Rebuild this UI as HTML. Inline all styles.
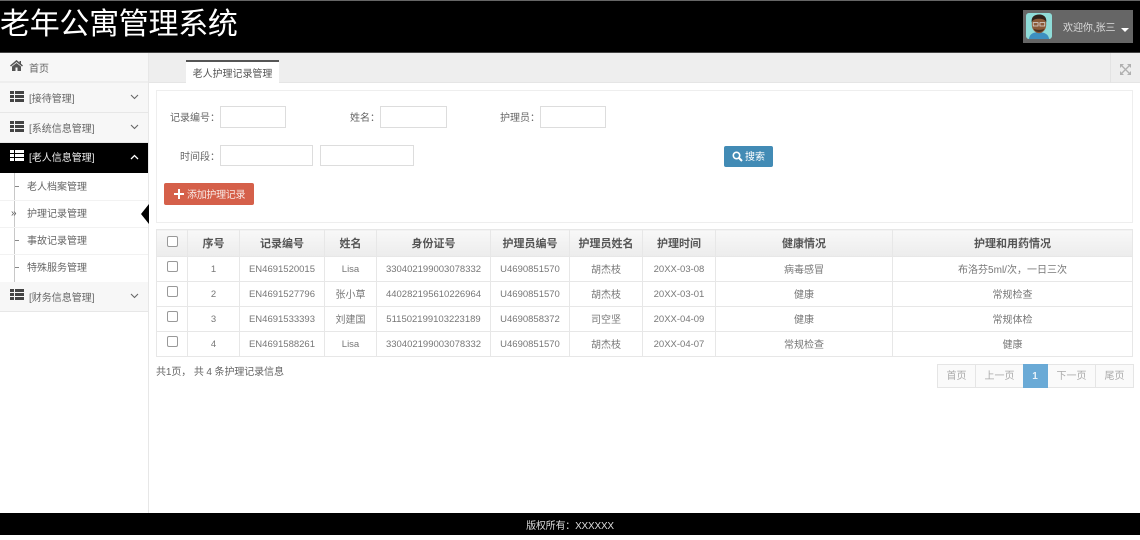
<!DOCTYPE html>
<html lang="zh">
<head>
<meta charset="utf-8">
<title>老年公寓管理系统</title>
<style>
html,body{margin:0;padding:0;width:1140px;height:535px;overflow:hidden;background:#fff;font-family:"Liberation Sans","Noto Sans CJK SC",sans-serif;color:#666;font-size:10px}
.a{position:absolute;box-sizing:border-box;white-space:nowrap}
.nav{left:0;width:148px;background:#f7f7f7;border-bottom:1px solid #e7e7e7;color:#666}
.nt{position:absolute;left:29px;top:0;font-size:10px}
.sub{left:27px;font-size:10px;color:#666;line-height:14px}
.ln{height:1px;left:0;width:148px;background:#f2f2f2}
.lab{font-size:10px;color:#666;line-height:14px;text-align:right}
.inp{background:#fff;border:1px solid #ddd;height:22px}
table{position:absolute;left:156px;top:229px;width:976px;border-collapse:collapse;table-layout:fixed;font-size:10px;color:#777}
th,td{border:1px solid #e7e7e7;text-align:center;padding:0;overflow:hidden;white-space:nowrap}
th{height:26px;background:linear-gradient(#f8f8f8,#ececec);color:#555;font-size:11px;font-weight:bold}
td{height:22px;padding-bottom:2px}
td.n{font-size:9.500px;height:24px;padding-bottom:0}
.cb{display:inline-block;width:9px;height:9px;border:1px solid #999;border-radius:2px;background:#fff;vertical-align:middle;margin-top:-3px}
.pg{top:364px;height:24px;background:#fafafa;border:1px solid #e5e5e5;border-left:0;color:#aaa;font-size:10px;line-height:24px;text-align:center}
</style>
</head>
<body>
<div class="a" style="left:0;top:0;width:1140px;height:53px;background:#000;border-top:1px solid #666;border-bottom:1px solid #444"></div>
<div class="a" style="left:0;top:6px;font-size:30px;line-height:38px;color:#fff;letter-spacing:-.3px">老年公寓管理系统</div>
<div class="a" style="left:1023px;top:10px;width:110px;height:33px;background:#666"></div>
<svg class="a" style="left:1026px;top:13px" width="26" height="26" viewBox="0 0 27 27">
<rect width="27" height="27" rx="3" fill="#8fdcd8"/>
<path d="M3 27c1-6 5-7 10-7s10 1 11 7z" fill="#3d8fc0"/>
<ellipse cx="13.500" cy="12" rx="7.500" ry="9" fill="#8a5a38"/>
<path d="M6 10C5 3 10 1.500 14 1.500S22 4 21 10c-1-3-3-4-7.500-4S7 7 6 10z" fill="#2e2018"/>
<path d="M8 16c1 5 10 5 11 0-1 2-10 2-11 0z" fill="#4a2e1c"/>
<rect x="7.500" y="10" width="5" height="3.500" fill="none" stroke="#ddd" stroke-width=".8"/>
<rect x="14.500" y="10" width="5" height="3.500" fill="none" stroke="#ddd" stroke-width=".8"/>
</svg>
<div class="a" style="left:1063px;top:22px;font-size:10px;line-height:14px;color:#ddd;letter-spacing:-.05px">欢迎你,张三</div>
<div class="a" style="left:1121px;top:28px;width:0;height:0;border-left:4.500px solid transparent;border-right:4.500px solid transparent;border-top:4.500px solid #fff"></div>

<div class="a" style="left:148px;top:53px;width:1px;height:460px;background:#e7e7e7"></div>

<div class="a nav" style="top:53px;height:30px;border-bottom:2px solid #eee"><svg class="a" style="left:10px;top:7px" width="13" height="11" viewBox="0 0 13 11"><path d="M6.500 0L0 5.500l1 1 5.500-4.500L12 6.500l1-1-2-1.700V1H9.500v1.500z M2 6.500V11h3.500V7.500h2V11H11V6.500L6.500 3z" fill="#555"/></svg><span class="nt" style="top:7px">首页</span></div>
<div class="a nav" style="top:83px;height:30px"></div>
<div class="a nav" style="top:113px;height:30px"></div>
<div class="a" style="left:0;top:143px;width:148px;height:30px;background:#000"></div>
<div class="a nav" style="top:282px;height:30px"></div>

<svg class="a" style="left:10px;top:91px" width="14" height="11"><path d="M0 0h4v3H0zM5 0h9v3H5zM0 4h4v3H0zM5 4h9v3H5zM0 8h4v3H0zM5 8h9v3H5z" fill="#444"/></svg>
<svg class="a" style="left:10px;top:121px" width="14" height="11"><path d="M0 0h4v3H0zM5 0h9v3H5zM0 4h4v3H0zM5 4h9v3H5zM0 8h4v3H0zM5 8h9v3H5z" fill="#444"/></svg>
<svg class="a" style="left:10px;top:150px" width="14" height="11"><path d="M0 0h4v3H0zM5 0h9v3H5zM0 4h4v3H0zM5 4h9v3H5zM0 8h4v3H0zM5 8h9v3H5z" fill="#fff"/></svg>
<svg class="a" style="left:10px;top:289px" width="14" height="11"><path d="M0 0h4v3H0zM5 0h9v3H5zM0 4h4v3H0zM5 4h9v3H5zM0 8h4v3H0zM5 8h9v3H5z" fill="#444"/></svg>

<div class="a" style="left:29px;top:93px;line-height:14px">[接待管理]</div>
<div class="a" style="left:29px;top:123px;line-height:14px">[系统信息管理]</div>
<div class="a" style="left:29px;top:152px;line-height:14px;color:#eee">[老人信息管理]</div>
<div class="a" style="left:29px;top:292px;line-height:14px">[财务信息管理]</div>

<svg class="a" style="left:130px;top:94px" width="9" height="6"><path d="M1 1l3.500 3.500L8 1" fill="none" stroke="#666" stroke-width="1.100"/></svg>
<svg class="a" style="left:130px;top:124px" width="9" height="6"><path d="M1 1l3.500 3.500L8 1" fill="none" stroke="#666" stroke-width="1.100"/></svg>
<svg class="a" style="left:130px;top:154px" width="9" height="6"><path d="M1 5l3.500-3.500L8 5" fill="none" stroke="#fff" stroke-width="1.300"/></svg>
<svg class="a" style="left:130px;top:293px" width="9" height="6"><path d="M1 1l3.500 3.500L8 1" fill="none" stroke="#666" stroke-width="1.100"/></svg>

<div class="a" style="left:14px;top:173px;width:1px;height:109px;background:#c8c8c8"></div>
<div class="a" style="left:15px;top:186px;width:4px;height:1px;background:#888"></div>
<div class="a" style="left:15px;top:240px;width:4px;height:1px;background:#888"></div>
<div class="a" style="left:15px;top:267px;width:4px;height:1px;background:#888"></div>
<div class="a" style="left:11px;top:207px;font-size:10px;line-height:14px;color:#555">»</div>
<div class="a ln" style="top:200px"></div><div class="a ln" style="top:227px"></div><div class="a ln" style="top:254px"></div>
<div class="a sub" style="top:181px">老人档案管理</div>
<div class="a sub" style="top:208px">护理记录管理</div>
<div class="a sub" style="top:235px">事故记录管理</div>
<div class="a sub" style="top:262px">特殊服务管理</div>
<div class="a" style="left:141px;top:204px;width:0;height:0;border-top:10px solid transparent;border-bottom:10px solid transparent;border-right:8px solid #000"></div>

<div class="a" style="left:149px;top:53px;width:991px;height:30px;background:#eee;border-bottom:1px solid #e5e5e5"></div>
<div class="a" style="left:186px;top:60px;width:93px;height:23px;background:#fff;border-top:2px solid #555;font-size:10px;line-height:25px;text-align:center;color:#555;letter-spacing:-.03px">老人护理记录管理</div>
<div class="a" style="left:1110px;top:53px;width:1px;height:30px;background:#e3e3e3"></div>
<svg class="a" style="left:1120px;top:64px" width="11" height="11" viewBox="0 0 11 11"><path d="M0 0h4L0 4zM11 0v4L7 0zM0 11V7l4 4zM11 11H7l4-4z" fill="#b0b0b0"/><path d="M2 2l7 7M9 2l-7 7" stroke="#b0b0b0" stroke-width="1.300"/></svg>

<div class="a" style="left:156px;top:90px;width:977px;height:133px;border:1px solid #eee;background:#fff"></div>
<div class="a lab" style="left:164px;top:112px;width:56px">记录编号：</div>
<div class="a inp" style="left:220px;top:106px;width:66px"></div>
<div class="a lab" style="left:324px;top:112px;width:56px">姓名：</div>
<div class="a inp" style="left:380px;top:106px;width:67px"></div>
<div class="a lab" style="left:484px;top:112px;width:56px">护理员：</div>
<div class="a inp" style="left:540px;top:106px;width:66px"></div>
<div class="a lab" style="left:164px;top:151px;width:56px">时间段：</div>
<div class="a inp" style="left:220px;top:145px;width:93px;height:21px"></div>
<div class="a inp" style="left:320px;top:145px;width:94px;height:21px"></div>
<div class="a" style="left:724px;top:146px;width:49px;height:21px;background:#428bb5;border-radius:2px;color:#fff;font-size:10px;line-height:24px;padding-left:21px">搜索</div>
<svg class="a" style="left:732px;top:151px" width="11" height="11" viewBox="0 0 11 11"><circle cx="4.500" cy="4.500" r="3.200" fill="none" stroke="#fff" stroke-width="1.600"/><path d="M7 7l3 3" stroke="#fff" stroke-width="2"/></svg>
<div class="a" style="left:164px;top:183px;width:90px;height:22px;background:#d5604a;border-radius:2px;color:#f8e8e4;font-size:10px;letter-spacing:-.3px;line-height:26px;padding-left:23px">添加护理记录</div>
<svg class="a" style="left:174px;top:189px" width="10" height="10"><path d="M4 0h2v4h4v2H6v4H4V6H0V4h4z" fill="#fff"/></svg>

<table>
<colgroup><col style="width:31px"><col style="width:52px"><col style="width:85px"><col style="width:52px"><col style="width:114px"><col style="width:79px"><col style="width:73px"><col style="width:73px"><col style="width:177px"><col style="width:240px"></colgroup>
<tr><th><span class="cb"></span></th><th>序号</th><th>记录编号</th><th>姓名</th><th>身份证号</th><th>护理员编号</th><th>护理员姓名</th><th>护理时间</th><th>健康情况</th><th>护理和用药情况</th></tr>
<tr><td><span class="cb"></span></td><td class="n">1</td><td class="n">EN4691520015</td><td class="n">Lisa</td><td class="n">330402199003078332</td><td class="n">U4690851570</td><td>胡杰枝</td><td class="n">20XX-03-08</td><td>病毒感冒</td><td>布洛芬5ml/次，一日三次</td></tr>
<tr><td><span class="cb"></span></td><td class="n">2</td><td class="n">EN4691527796</td><td>张小草</td><td class="n">440282195610226964</td><td class="n">U4690851570</td><td>胡杰枝</td><td class="n">20XX-03-01</td><td>健康</td><td>常规检查</td></tr>
<tr><td><span class="cb"></span></td><td class="n">3</td><td class="n">EN4691533393</td><td>刘建国</td><td class="n">511502199103223189</td><td class="n">U4690858372</td><td>司空坚</td><td class="n">20XX-04-09</td><td>健康</td><td>常规体检</td></tr>
<tr><td><span class="cb"></span></td><td class="n">4</td><td class="n">EN4691588261</td><td class="n">Lisa</td><td class="n">330402199003078332</td><td class="n">U4690851570</td><td>胡杰枝</td><td class="n">20XX-04-07</td><td>常规检查</td><td>健康</td></tr>
</table>

<div class="a" style="left:156px;top:364px;font-size:10px;line-height:16px;color:#666;letter-spacing:-.1px;padding-top:1px">共1页， 共 4 条护理记录信息</div>
<div class="a pg" style="left:937px;width:39px;border-left:1px solid #e5e5e5">首页</div>
<div class="a pg" style="left:976px;width:48px">上一页</div>
<div class="a pg" style="left:1023px;width:25px;background:#6aaad6;border-color:#6aaad6;color:#e8f2fa;font-weight:bold">1</div>
<div class="a pg" style="left:1048px;width:48px">下一页</div>
<div class="a pg" style="left:1096px;width:38px">尾页</div>

<div class="a" style="left:0;top:513px;width:1140px;height:22px;background:#000;color:#ddd;font-size:10px;line-height:27px;text-align:center;letter-spacing:-.2px">版权所有：XXXXXX</div>
</body>
</html>
